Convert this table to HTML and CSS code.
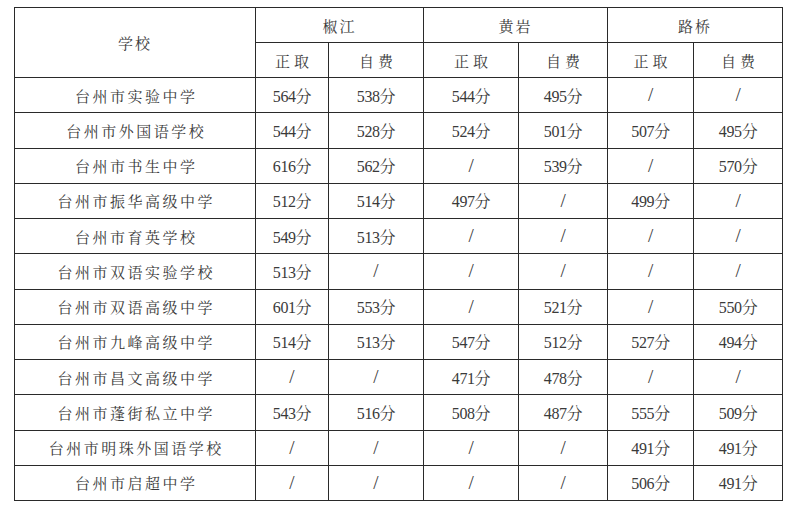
FILE: index.html
```html
<!DOCTYPE html>
<html lang="zh-CN">
<head>
<meta charset="utf-8">
<title>台州市学校录取分数</title>
<link rel="stylesheet" href="styles.css">
</head>
<body>
<table class="scores">
  <colgroup>
    <col class="c-school">
    <col class="c-a">
    <col class="c-b">
    <col class="c-c">
    <col class="c-d">
    <col class="c-e">
    <col class="c-f">
  </colgroup>
  <thead>
    <tr class="hrow">
      <th rowspan="2" class="school-head">学校</th>
      <th colspan="2" class="region">椒江</th>
      <th colspan="2" class="region">黄岩</th>
      <th colspan="2" class="region">路桥</th>
    </tr>
    <tr class="hrow">
      <th class="sub">正取</th><th class="sub">自费</th>
      <th class="sub">正取</th><th class="sub">自费</th>
      <th class="sub">正取</th><th class="sub">自费</th>
    </tr>
  </thead>
  <tbody>
    <tr><td class="name">台州市实验中学</td><td>564分</td><td>538分</td><td>544分</td><td>495分</td><td class="na">/</td><td class="na">/</td></tr>
    <tr><td class="name">台州市外国语学校</td><td>544分</td><td>528分</td><td>524分</td><td>501分</td><td>507分</td><td>495分</td></tr>
    <tr><td class="name">台州市书生中学</td><td>616分</td><td>562分</td><td class="na">/</td><td>539分</td><td class="na">/</td><td>570分</td></tr>
    <tr><td class="name">台州市振华高级中学</td><td>512分</td><td>514分</td><td>497分</td><td class="na">/</td><td>499分</td><td class="na">/</td></tr>
    <tr><td class="name">台州市育英学校</td><td>549分</td><td>513分</td><td class="na">/</td><td class="na">/</td><td class="na">/</td><td class="na">/</td></tr>
    <tr><td class="name">台州市双语实验学校</td><td>513分</td><td class="na">/</td><td class="na">/</td><td class="na">/</td><td class="na">/</td><td class="na">/</td></tr>
    <tr><td class="name">台州市双语高级中学</td><td>601分</td><td>553分</td><td class="na">/</td><td>521分</td><td class="na">/</td><td>550分</td></tr>
    <tr><td class="name">台州市九峰高级中学</td><td>514分</td><td>513分</td><td>547分</td><td>512分</td><td>527分</td><td>494分</td></tr>
    <tr><td class="name">台州市昌文高级中学</td><td class="na">/</td><td class="na">/</td><td>471分</td><td>478分</td><td class="na">/</td><td class="na">/</td></tr>
    <tr><td class="name">台州市蓬街私立中学</td><td>543分</td><td>516分</td><td>508分</td><td>487分</td><td>555分</td><td>509分</td></tr>
    <tr><td class="name">台州市明珠外国语学校</td><td class="na">/</td><td class="na">/</td><td class="na">/</td><td class="na">/</td><td>491分</td><td>491分</td></tr>
    <tr><td class="name">台州市启超中学</td><td class="na">/</td><td class="na">/</td><td class="na">/</td><td class="na">/</td><td>506分</td><td>491分</td></tr>
  </tbody>
</table>
</body>
</html>
```
FILE: styles.css
```css
html, body {
  margin: 0;
  padding: 0;
  background: #ffffff;
}
body {
  padding: 7px 0 0 14px;
}
.scores {
  border-collapse: collapse;
  table-layout: fixed;
  width: 768px;
  font-family: "Liberation Serif", "Noto Serif CJK SC", "Noto Sans CJK SC", serif;
  font-size: 16px;
  letter-spacing: -0.4px;
  color: #3a3a3a;
}
.c-school { width: 241px; }
.c-a { width: 73px; }
.c-b { width: 95px; }
.c-c { width: 95px; }
.c-d { width: 89px; }
.c-e { width: 86px; }
.c-f { width: 89px; }
.scores th,
.scores td {
  border: 1px solid #2a2a2a;
  padding: 0;
  text-align: center;
  vertical-align: middle;
  font-weight: normal;
  white-space: nowrap;
}
.hrow { height: 35px; }
.scores tbody tr { height: 35.25px; }
.school-head,
.region {
  font-size: 15px;
  letter-spacing: 2px;
}
.sub {
  font-size: 15px;
  letter-spacing: 4px;
  text-indent: 4px;
}
.name {
  font-size: 15px;
  letter-spacing: 2.5px;
  text-indent: 2.5px;
}
.na {
  font-family: "Liberation Serif", serif;
  font-size: 19px;
  letter-spacing: 0;
}
```
